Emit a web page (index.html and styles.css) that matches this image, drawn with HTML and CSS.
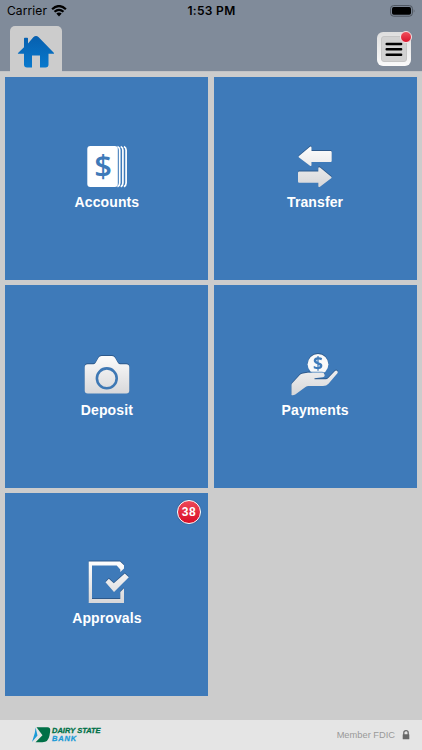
FILE: index.html
```
<!DOCTYPE html>
<html lang="en">
  <head>
    <meta charset="utf-8">
    <title>Dairy State Bank</title>
    <link rel="stylesheet" href="styles.css">
  </head>
  <body>
    <svg class="defs" width="0" height="0">
      <defs>
        <linearGradient id="silver" x1="0" y1="0" x2="0" y2="46" gradientUnits="userSpaceOnUse">
          <stop offset="0" stop-color="#fff" />
          <stop offset="1" stop-color="#d4d4d6" />
        </linearGradient>
        <linearGradient id="houseBlue" x1="0" y1="0" x2="0" y2="1">
          <stop offset="0" stop-color="#075fae" />
          <stop offset="1" stop-color="#0879cd" />
        </linearGradient>
      </defs>
    </svg>

    <header class="header">
      <div class="status">
        <div class="carrier">
          Carrier
          <svg width="16" height="12" viewBox="0 0 16 12">
            <path d="M1.1 4.2Q8-2.1 14.9 4.2M3.5 6.8Q8 2.8 12.5 6.8" fill="none" stroke="#000" stroke-width="2.2" />
            <path d="M5.3 8.6Q8 6.5 10.7 8.6L8 11.4Z" />
          </svg>
        </div>
        <div class="time">1:53 PM</div>
        <svg class="battery" width="26" height="12" viewBox="0 0 26 12">
          <rect x=".6" y=".6" width="21.8" height="10.6" rx="3" fill="none" stroke="#4c535d" />
          <rect x="2" y="2" width="19" height="7.8" rx="1.7" />
          <path d="M23.8 4Q25.2 5.9 23.8 7.8Z" fill="#4c535d" />
        </svg>
      </div>
      <div class="nav">
        <div class="home-tab">
          <svg width="38" height="34" viewBox="0 0 38 34">
            <path d="M1 18L7 12.3V3.5Q7 2.8 7.8 2.8H10.3Q11 2.8 11 3.5V8.4L16.3 2.2Q19 -.4 21.7 2.2L37 18Q37.2 18.8 36.4 18.8H31.5V29.5Q31.5 32.5 28.5 32.5H23V20.5H15V32.5H10Q7 32.5 7 29.5V18.8H1.5Q.6 18.8 1 18Z" fill="url(#houseBlue)" />
          </svg>
        </div>
        <div class="menu-button">
          <div class="menu-face">
            <svg width="18" height="15" viewBox="0 0 18 15">
              <path d="M1.7 1.9H16.1M1.7 7.3H16.1M1.7 12.7H16.1" stroke="#000" stroke-width="2.5" stroke-linecap="round" />
            </svg>
          </div>
          <div class="dot"></div>
        </div>
      </div>
    </header>

    <main class="tiles">
      <div class="tile">
        <svg width="60" height="46" viewBox="0 0 60 46">
          <rect x="10.3" y="2" width="30.5" height="41" rx="3" fill="#fff" />
          <path d="M40.5 2.5Q42.7 3.5 42.7 6V39Q42.7 41.7 40.5 42.7M43.7 2.5Q45.9 3.5 45.9 6V39Q45.9 41.7 43.7 42.7M46.9 2.5Q49.1 3.5 49.1 6V39Q49.1 41.7 46.9 42.7" fill="none" stroke="#fff" stroke-width="1.7" />
          <text class="dollar" x="26" y="33" font-size="31">$</text>
        </svg>
        <div class="label">Accounts</div>
      </div>

      <div class="tile">
        <svg class="raised" width="60" height="46" viewBox="0 0 60 46">
          <path d="M13.7 12.3L25 2.8Q26.5 2 26.5 3.7V7H45.5Q46.7 7 46.7 8.2V16.9Q46.7 18 45.5 18H26.5V21Q26.5 22.7 25 21.8L13.7 13.2Z" fill="url(#silver)" />
          <path d="M46.5 33L35 23.5Q33.3 22.6 33.3 24.3V27.6H14.2Q13 27.6 13 28.8V37.5Q13 38.7 14.2 38.7H33.3V42Q33.3 43.7 35 42.8L46.5 33.9Z" fill="url(#silver)" />
        </svg>
        <div class="label">Transfer</div>
      </div>

      <div class="tile">
        <svg class="raised" width="60" height="46" viewBox="0 0 60 46">
          <path d="M10.7 12.3H16.5Q18 12.2 18.8 10.5L21.5 5.8Q22.5 4 24.5 4H35Q37 4 38 5.8L40.7 10.5Q41.5 12.2 43 12.3H49.3Q52.3 12.3 52.3 15.3V38.4Q52.3 41.4 49.3 41.4H10.7Q7.7 41.4 7.7 38.4V15.3Q7.7 12.3 10.7 12.3Z" fill="url(#silver)" />
          <circle cx="29.8" cy="26.3" r="9.9" fill="none" stroke="#3e78b4" stroke-width="2.6" />
        </svg>
        <div class="label">Deposit</div>
      </div>

      <div class="tile">
        <svg class="raised" width="60" height="46" viewBox="0 0 60 46">
          <circle cx="33" cy="12.3" r="10.4" fill="#f9f9f9" />
          <text class="dollar coin" x="33" y="18" font-size="17.5">$</text>
          <path d="M6.5 43V33Q6.5 32 7.2 31.2L15 22.7Q16 21.5 18 21.4L24 20.5H36.5Q39.8 20.7 39.7 23.6Q39.6 25.2 37.5 25.3L29.5 26.3V27.2H40.5Q42.2 27.2 43.3 26L49.5 19.4Q51.2 17.9 52.4 19.2Q53.2 20.2 52.2 21.5L43.5 31.8Q41.5 34 38 34H23.5Q21.8 34 20.5 35L10.3 42.5Q8 43.8 6.5 43Z" fill="url(#silver)" />
          <path d="M23.5 20.2H37Q39 20.3 39.9 21.5" fill="none" stroke="#3e7ab9" stroke-width=".8" />
        </svg>
        <div class="label">Payments</div>
      </div>

      <div class="tile">
        <svg class="raised" width="60" height="46" viewBox="0 0 60 46">
          <path d="M11.7 1.4H43L47 5.2V8.5L43.3 12V9.5L39.7 5.5H15V39H43.3V32L47 28.3V43H11.7Z" fill="url(#silver)" />
          <path d="M28.5 22.3L31.8 18.8L36.8 23.2L47.8 13.6L51.8 17.3L37 32Z" fill="url(#silver)" />
        </svg>
        <div class="label">Approvals</div>
        <div class="badge">38</div>
      </div>
    </main>

    <footer class="footer">
      <div class="logo">
        <svg width="19" height="16" viewBox="0 0 19 16">
          <path d="M4.5.3H15.5Q18.7.3 18.2 4L17.5 8.5Q16.3 15.3 10.5 15.3H3.5L10.5 8.2Z" fill="#007047" />
          <path d="M3.6.6L2.8 6L0 15L5.5 8.5Z" fill="#1c9bd7" />
        </svg>
        <div class="logo-text">
          <div class="logo-top">DAIRY STATE</div>
          <div class="logo-bottom">BANK</div>
        </div>
      </div>
      <div class="fdic">
        Member FDIC
        <svg width="8" height="10" viewBox="0 0 8 10">
          <path d="M1.8 5V2.8Q1.8.7 4 .7Q6.2.7 6.2 2.8V5" fill="none" stroke="#686868" stroke-width="1.3" />
          <rect x=".7" y="4.2" width="6.6" height="5" rx=".5" fill="#686868" />
        </svg>
      </div>
    </footer>
  </body>
</html>
```
FILE: styles.css
```
* {
  box-sizing: border-box;
}

body {
  margin: 0;
  height: 750px;
  display: flex;
  flex-direction: column;
  background-color: #cccccc;
  font-family: "Liberation Sans", Arial, sans-serif;
  overflow: hidden;
}

svg {
  display: block;
  flex: none;
}

.defs {
  position: absolute;
}

.header {
  height: 72px;
  background-color: #808b9a;
  border-bottom: 1px solid #c2c3c6;
}

.status {
  height: 21px;
  padding: 0 6px 0 7px;
  display: grid;
  grid-template-columns: 1fr auto 1fr;
  align-items: center;
  font-family: Inter, sans-serif;
  font-size: 12px;
  color: #000;
}

.carrier {
  display: flex;
  align-items: center;
  gap: 4px;
  letter-spacing: 0.1px;
}

.time {
  font-weight: 600;
  letter-spacing: 0.3px;
}

.battery {
  justify-self: end;
}

.nav {
  height: 50px;
  padding: 0 11px 0 10px;
  display: flex;
  justify-content: space-between;
}

.home-tab {
  width: 52px;
  height: 46px;
  margin-top: 5px;
  padding: 9px 0 0 7px;
  border-radius: 5px 5px 0 0;
  background-color: #cccccc;
}

.menu-button {
  position: relative;
  width: 34px;
  height: 34px;
  margin-top: 11px;
  padding: 4px;
  border-radius: 6px;
  background: linear-gradient(#dedede, #fafafa);
}

.menu-face {
  height: 26px;
  padding: 5px 0 0 3px;
  border-radius: 3px;
  background-color: #d1d1d1;
  border: 1px solid #c5c5c5;
}

.dot {
  position: absolute;
  top: -1px;
  right: -1px;
  width: 12px;
  height: 12px;
  border: 1px solid #f4e4e6;
  border-radius: 50%;
  background: linear-gradient(#f0505c, #d9142c);
}

.tiles {
  flex: 1;
  padding: 5px 5px 0 5.4px;
  display: grid;
  grid-template-columns: 203px 203px;
  grid-auto-rows: 203px;
  gap: 5.2px;
}

.tile {
  position: relative;
  padding-top: 67px;
  display: flex;
  flex-direction: column;
  align-items: center;
  background-color: #3e7ab9;
}

.raised {
  overflow: visible;
  filter: drop-shadow(0 -0.5px 0.4px rgba(20, 40, 70, 0.4));
}

.dollar {
  font-family: "Open Sans", sans-serif;
  font-weight: 600;
  text-anchor: middle;
  fill: #3e7ab9;
}

.coin {
  font-weight: 700;
}

.label {
  margin-top: 2px;
  line-height: 20px;
  font-size: 14px;
  font-weight: bold;
  letter-spacing: 0.1px;
  color: #fff;
}

.badge {
  position: absolute;
  top: 7px;
  right: 7.5px;
  width: 24px;
  height: 24px;
  border: 1.5px solid #fff;
  border-radius: 50%;
  background: linear-gradient(#ee4858, #d90d26);
  box-shadow: 0 0 1px rgba(0, 0, 0, 0.6);
  color: #fff;
  font-size: 12px;
  font-weight: bold;
  line-height: 22px;
  text-align: center;
  letter-spacing: 0.5px;
}

.footer {
  height: 30px;
  padding: 0 12px 1px 32px;
  display: flex;
  justify-content: space-between;
  align-items: center;
  background-color: #e5e5e5;
}

.logo {
  display: flex;
  align-items: center;
  gap: 1px;
}

.logo-text {
  font-family: "Liberation Sans", Arial, sans-serif;
  font-size: 7.5px;
  font-weight: bold;
  font-style: italic;
  line-height: 8px;
  -webkit-text-stroke: 0.3px;
}

.logo-top {
  color: #007047;
}

.logo-bottom {
  color: #1c9bd7;
  letter-spacing: 0.8px;
}

.fdic {
  display: flex;
  align-items: center;
  gap: 7px;
  font-size: 9.3px;
  color: #999;
}
```
